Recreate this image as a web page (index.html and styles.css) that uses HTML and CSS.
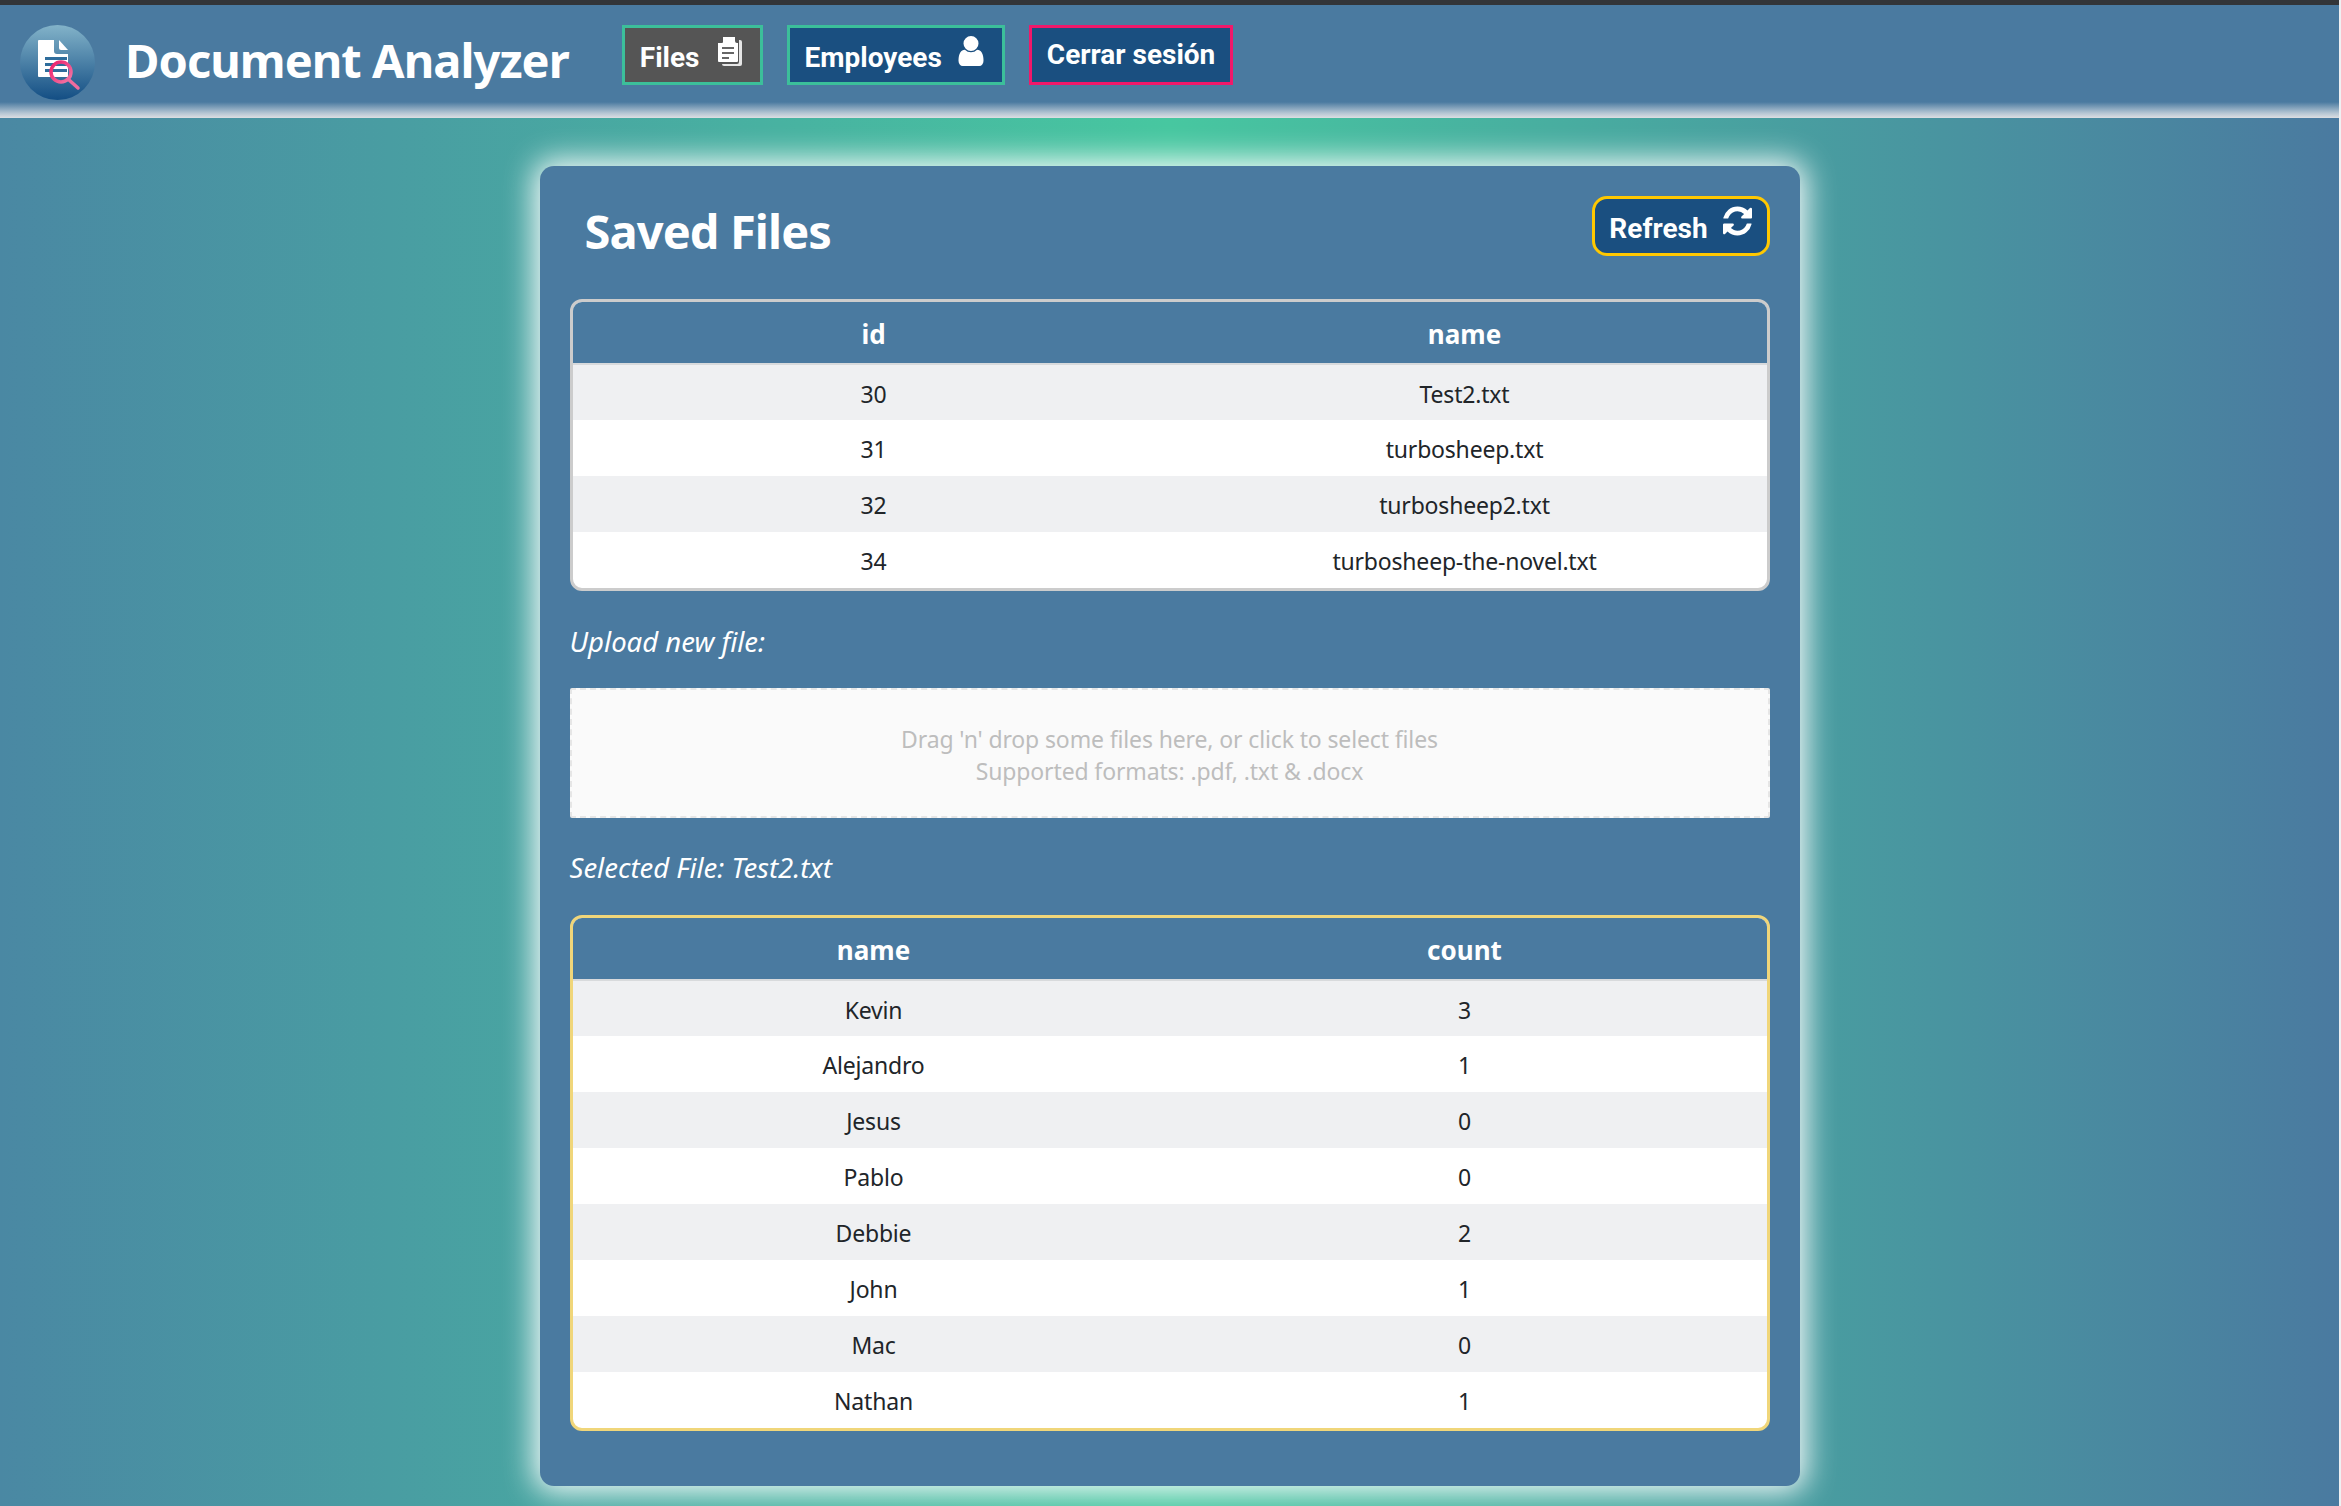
FILE: index.html
```html
<!DOCTYPE html>
<html lang="en">

<head>
    <meta charset="UTF-8">
    <meta name="viewport" content="width=device-width, initial-scale=1.0">
    <title>Document Analyzer</title>
    <link rel="stylesheet" href="styles.css">
</head>

<body>
    <div class="page">
        <header class="topbar">
            <svg class="logo" viewBox="0 0 75 75" aria-hidden="true">
                <defs>
                    <linearGradient id="logo-bg" x1="0" y1="0" x2="0" y2="1">
                        <stop offset="0" stop-color="#83b3c9" />
                        <stop offset="1" stop-color="#134e84" />
                    </linearGradient>
                    <linearGradient id="logo-pink" x1="0" y1="0" x2="1" y2="1">
                        <stop offset="0" stop-color="#ee1c68" />
                        <stop offset="1" stop-color="#f27aa8" />
                    </linearGradient>
                </defs>
                <circle cx="37.5" cy="37.5" r="37.5" fill="url(#logo-bg)" />
                <path d="M19 15h15v11q0 3 3 3h11v23H19q-1 0-1-1V16q0-1 1-1z" fill="#fff" />
                <path d="M39 15l9 10h-7q-2 0-2-2z" fill="#fff" />
                <path d="M25 32h22v3H25zM25 38h22v3H25zM25 44h22v3H25z" fill="#2f6d9c" />
                <circle cx="41" cy="47" r="10" fill="none" stroke="url(#logo-pink)" stroke-width="3.5" />
                <path d="M48 54l10 9" stroke="#f06c9f" stroke-width="3.5" stroke-linecap="round" />
            </svg>
            <h1 class="brand">Document Analyzer</h1>
            <nav class="nav">
                <a class="nav-btn nav-btn-active">
                    Files
                    <svg class="nav-icon" viewBox="0 0 26 30" aria-hidden="true">
                        <path d="M6 4h18q2 0 2 2v22q0 2-2 2H8q-2 0-2-2z" fill="#e6e6e6" />
                        <path d="M7 0h13l3 3v23q0 2-2 2H3q-2 0-2-2V6z" fill="#555" />
                        <path d="M7 1h12v4q0 2 2 2h1v18q0 1-1 1H3q-1 0-1-1V7h4q1 0 1-1z" fill="#fff" />
                        <path d="M6 11h12v2H6zM6 16h12v2H6zM6 21h7v2H6z" fill="#666" />
                    </svg>
                </a>
                <a class="nav-btn">
                    Employees
                    <svg class="nav-icon" viewBox="256 128 1280 1536" aria-hidden="true">
                        <path fill="#fff" d="M1536 1399q0 109-62.5 187t-150.5 78h-854q-88 0-150.5-78t-62.5-187q0-85 8.5-160.5t31.5-152 58.5-131 94-89 134.5-34.5q131 128 313 128t313-128q76 0 134.5 34.5t94 89 58.5 131 31.5 152 8.5 160.5zm-256-887q0 159-112.5 271.5t-271.5 112.5-271.5-112.5-112.5-271.5 112.5-271.5 271.5-112.5 271.5 112.5 112.5 271.5z" />
                    </svg>
                </a>
                <a class="nav-btn nav-btn-logout">Cerrar sesión</a>
            </nav>
        </header>

        <main class="content">
            <section class="card">
                <div class="card-head">
                    <h2 class="card-title">Saved Files</h2>
                    <button class="refresh-btn">
                        Refresh
                        <svg class="refresh-icon" viewBox="128 128 1536 1536" aria-hidden="true">
                            <path fill="#fff" d="M1639 1056q0 5-1 7-64 268-268 434.5t-478 166.5q-146 0-282.5-55t-243.5-157l-129 129q-19 19-45 19t-45-19-19-45v-448q0-26 19-45t45-19h448q26 0 45 19t19 45-19 45l-137 137q71 66 161 102t187 36q134 0 250-65t186-179q11-17 53-117 8-23 30-23h192q13 0 22.5 9.5t9.5 22.5zm25-800v448q0 26-19 45t-45 19h-448q-26 0-45-19t-19-45 19-45l138-138q-148-137-349-137-134 0-250 65t-186 179q-11 17-53 117-8 23-30 23h-199q-13 0-22.5-9.5t-9.5-22.5v-7q65-268 270-434.5t480-166.5q146 0 284 55.5t245 156.5l130-129q19-19 45-19t45 19 19 45z" />
                        </svg>
                    </button>
                </div>

                <div class="table-wrap">
                    <table class="data-table">
                        <thead>
                            <tr><th>id</th><th>name</th></tr>
                        </thead>
                        <tbody>
                            <tr><td>30</td><td>Test2.txt</td></tr>
                            <tr><td>31</td><td>turbosheep.txt</td></tr>
                            <tr><td>32</td><td>turbosheep2.txt</td></tr>
                            <tr><td>34</td><td>turbosheep-the-novel.txt</td></tr>
                        </tbody>
                    </table>
                </div>

                <p class="section-label label-upload">Upload new file:</p>
                <div class="dropzone">
                    <p>Drag 'n' drop some files here, or click to select files</p>
                    <p>Supported formats: .pdf, .txt &amp; .docx</p>
                </div>

                <p class="section-label label-selected">Selected File: Test2.txt</p>
                <div class="table-wrap table-wrap-yellow">
                    <table class="data-table">
                        <thead>
                            <tr><th>name</th><th>count</th></tr>
                        </thead>
                        <tbody>
                            <tr><td>Kevin</td><td>3</td></tr>
                            <tr><td>Alejandro</td><td>1</td></tr>
                            <tr><td>Jesus</td><td>0</td></tr>
                            <tr><td>Pablo</td><td>0</td></tr>
                            <tr><td>Debbie</td><td>2</td></tr>
                            <tr><td>John</td><td>1</td></tr>
                            <tr><td>Mac</td><td>0</td></tr>
                            <tr><td>Nathan</td><td>1</td></tr>
                        </tbody>
                    </table>
                </div>
            </section>
        </main>
    </div>
</body>

</html>
```
FILE: styles.css
```css
/* General Reset */
* {
    margin: 0;
    padding: 0;
    box-sizing: border-box;
}

html,
body {
    height: 1506px;
    overflow: hidden;
}

body {
    font-family: 'Noto Sans', sans-serif;
    background-color: #eef0f2;
    color: #212529;
}

.page {
    height: 100%;
    margin-right: 2px;
    display: flex;
    flex-direction: column;
    border-top: 5px solid #333538;
    background: linear-gradient(90deg, #4a88a3 0%, #47c7a0 50%, #4a7aa0 100%);
}

/* Top bar */
.topbar {
    height: 113px;
    display: flex;
    align-items: flex-start;
    padding: 20px 0 0 20px;
    background: linear-gradient(#4a7aa0 0, #4a7aa0 97px, #b4c5d3 108px, #dcdee2 113px);
}

.logo {
    width: 75px;
    height: 75px;
    flex-shrink: 0;
}

.brand {
    margin: 3px 0 0 30px;
    font-size: 47px;
    line-height: 64px;
    font-weight: 700;
    letter-spacing: -0.95px;
    color: #fff;
    white-space: nowrap;
}

.nav {
    display: flex;
    gap: 24px;
    margin-left: 53px;
}

.nav-btn {
    height: 60px;
    display: flex;
    align-items: center;
    gap: 16px;
    padding: 4px 18px 0 15px;
    font-family: 'Roboto', sans-serif;
    font-size: 28px;
    font-weight: 700;
    color: #fff;
    background-color: #1a4f80;
    border: 3px solid #3cbf9a;
}

.nav-btn-active {
    background-color: #555;
}

.nav-btn-logout {
    border-color: #f0186a;
    padding: 0 15px 2px;
}

.nav-icon {
    height: 30px;
    width: 26px;
    margin-top: -13px;
}

/* Main card */
.content {
    flex: 1;
    display: flex;
    justify-content: center;
    padding-top: 48px;
}

.card {
    width: 1260px;
    height: 1320px;
    padding: 30px 30px 0;
    background-color: #4a7aa0;
    border-radius: 14px;
    box-shadow: 0 0 30px 6px rgba(255, 255, 255, 0.95);
}

.card-head {
    height: 103px;
    display: flex;
    justify-content: space-between;
    align-items: flex-start;
}

.card-title {
    margin: 3px 0 0 15px;
    font-size: 47px;
    line-height: 64px;
    font-weight: 700;
    letter-spacing: -0.9px;
    color: #fff;
}

.refresh-btn {
    height: 60px;
    width: 178px;
    display: flex;
    align-items: center;
    justify-content: center;
    gap: 15px;
    padding-top: 5px;
    font-family: 'Roboto', sans-serif;
    font-size: 28px;
    font-weight: 700;
    color: #fff;
    background-color: #1a4f80;
    border: 3px solid #ffc800;
    border-radius: 15px;
}

.refresh-icon {
    width: 29px;
    height: 30px;
    margin-top: -16px;
}

/* Tables */
.table-wrap {
    border: 3px solid #ccc;
    border-radius: 12px;
    overflow: hidden;
    background-color: #fff;
}

.table-wrap-yellow {
    border-color: #f0d67a;
}

.table-wrap-yellow th {
    height: 63px;
}

.data-table {
    width: 100%;
    border-collapse: collapse;
    table-layout: fixed;
    font-size: 23px;
    letter-spacing: -0.2px;
    text-align: center;
}

.data-table th:first-child,
.data-table td:first-child {
    width: 602px;
}

.data-table th:last-child,
.data-table td:last-child {
    padding-right: 12px;
}

.data-table th {
    height: 62px;
    padding-top: 2px;
    font-size: 26px;
    font-weight: 700;
    letter-spacing: 0;
    color: #fff;
    background-color: #4a7aa0;
    border-bottom: 2px solid #d8dadc;
}

.data-table td {
    height: 56px;
    padding-top: 2px;
    color: #212529;
}

.data-table tbody tr:nth-child(odd) {
    background-color: #eff0f2;
}

/* Upload area */
.section-label {
    font-size: 27.5px;
    line-height: 36px;
    font-style: italic;
    color: #fff;
}

.label-upload {
    margin-top: 33px;
    margin-bottom: 28px;
}

.label-selected {
    margin-top: 32px;
    margin-bottom: 29px;
}

.dropzone {
    height: 130px;
    display: flex;
    flex-direction: column;
    align-items: center;
    justify-content: center;
    padding-top: 3px;
    font-size: 23px;
    line-height: 32px;
    letter-spacing: -0.13px;
    color: #bdbdbd;
    background-color: #fafafa;
    border: 2px dashed #e6e6e6;
    border-radius: 2px;
}
```
